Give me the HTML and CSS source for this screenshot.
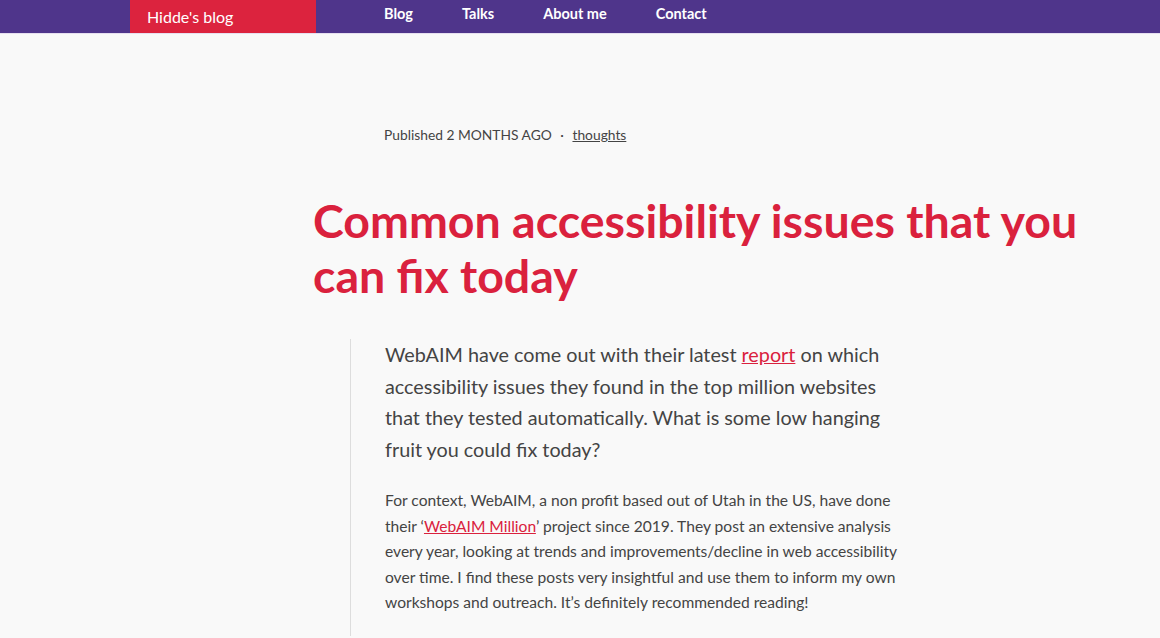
FILE: index.html
```html
<!DOCTYPE html>
<html lang="en">
<head>
<meta charset="utf-8">
<title>Common accessibility issues that you can fix today</title>
<link rel="stylesheet" href="styles.css">
</head>
<body>
<header class="site-header">
  <a class="site-name" href="#">Hidde's blog</a>
  <nav class="site-nav">
    <a href="#">Blog</a>
    <a href="#">Talks</a>
    <a href="#">About me</a>
    <a href="#">Contact</a>
  </nav>
</header>
<main class="post">
  <p class="meta">Published 2 MONTHS AGO <span class="dot">·</span> <a href="#">thoughts</a></p>
  <h1 class="title">Common accessibility issues that you can fix today</h1>
  <div class="body">
    <p class="intro">WebAIM have come out with their latest <a href="#">report</a> on which accessibility issues they found in the top million websites that they tested automatically. What is some low hanging fruit you could fix today?</p>
    <p class="text">For context, WebAIM, a non profit based out of Utah in the US, have done their ‘<a href="#">WebAIM Million</a>’ project since 2019. They post an extensive analysis every year, looking at trends and improvements/decline in web accessibility over time. I find these posts very insightful and use them to inform my own workshops and outreach. It’s definitely recommended reading!</p>
  </div>
</main>
</body>
</html>
```
FILE: styles.css
```css
html, body {
  margin: 0;
  padding: 0;
}
body {
  background: #f9f9f9;
  font-family: Lato, "Open Sans", sans-serif;
  color: #444;
}
.site-header {
  display: flex;
  height: 33px;
  padding-left: 130px;
  background: #4f358b;
  border-bottom: 1px solid #e6e0f0;
}
.site-name {
  display: flex;
  align-items: center;
  width: 186px;
  box-sizing: border-box;
  padding-left: 17px;
  background: #dc233e;
  color: #fff;
  text-decoration: none;
  font-size: 16px;
}
.site-nav {
  display: flex;
  align-items: center;
  padding-left: 68px;
  padding-bottom: 6px;
}
.site-nav a {
  color: #fff;
  font-weight: 700;
  font-size: 14.5px;
  text-decoration: none;
  margin-right: 49px;
}
.post {
  padding-top: 93px;
}
.meta {
  margin: 0 0 0 384px;
  font-size: 13.8px;
  line-height: 16px;
  color: #444;
}
.meta .dot {
  margin: 0 5px;
}
.meta a {
  color: #444;
}
.title {
  margin: 50px 0 0 313px;
  width: 820px;
  color: #da213d;
  font-size: 46.5px;
  line-height: 55px;
  font-weight: 700;
}
.body {
  margin: 36px 0 0 350px;
  border-left: 1px solid #ddd;
  padding-left: 34px;
  width: 530px;
  padding-bottom: 20px;
}
.intro {
  margin: 0;
  padding-top: 0;
  width: 518px;
  font-size: 19.8px;
  line-height: 31.5px;
}
.text {
  margin: 23px 0 0;
  font-size: 15.6px;
  line-height: 25.5px;
}
.body a {
  color: #da213d;
}
```
